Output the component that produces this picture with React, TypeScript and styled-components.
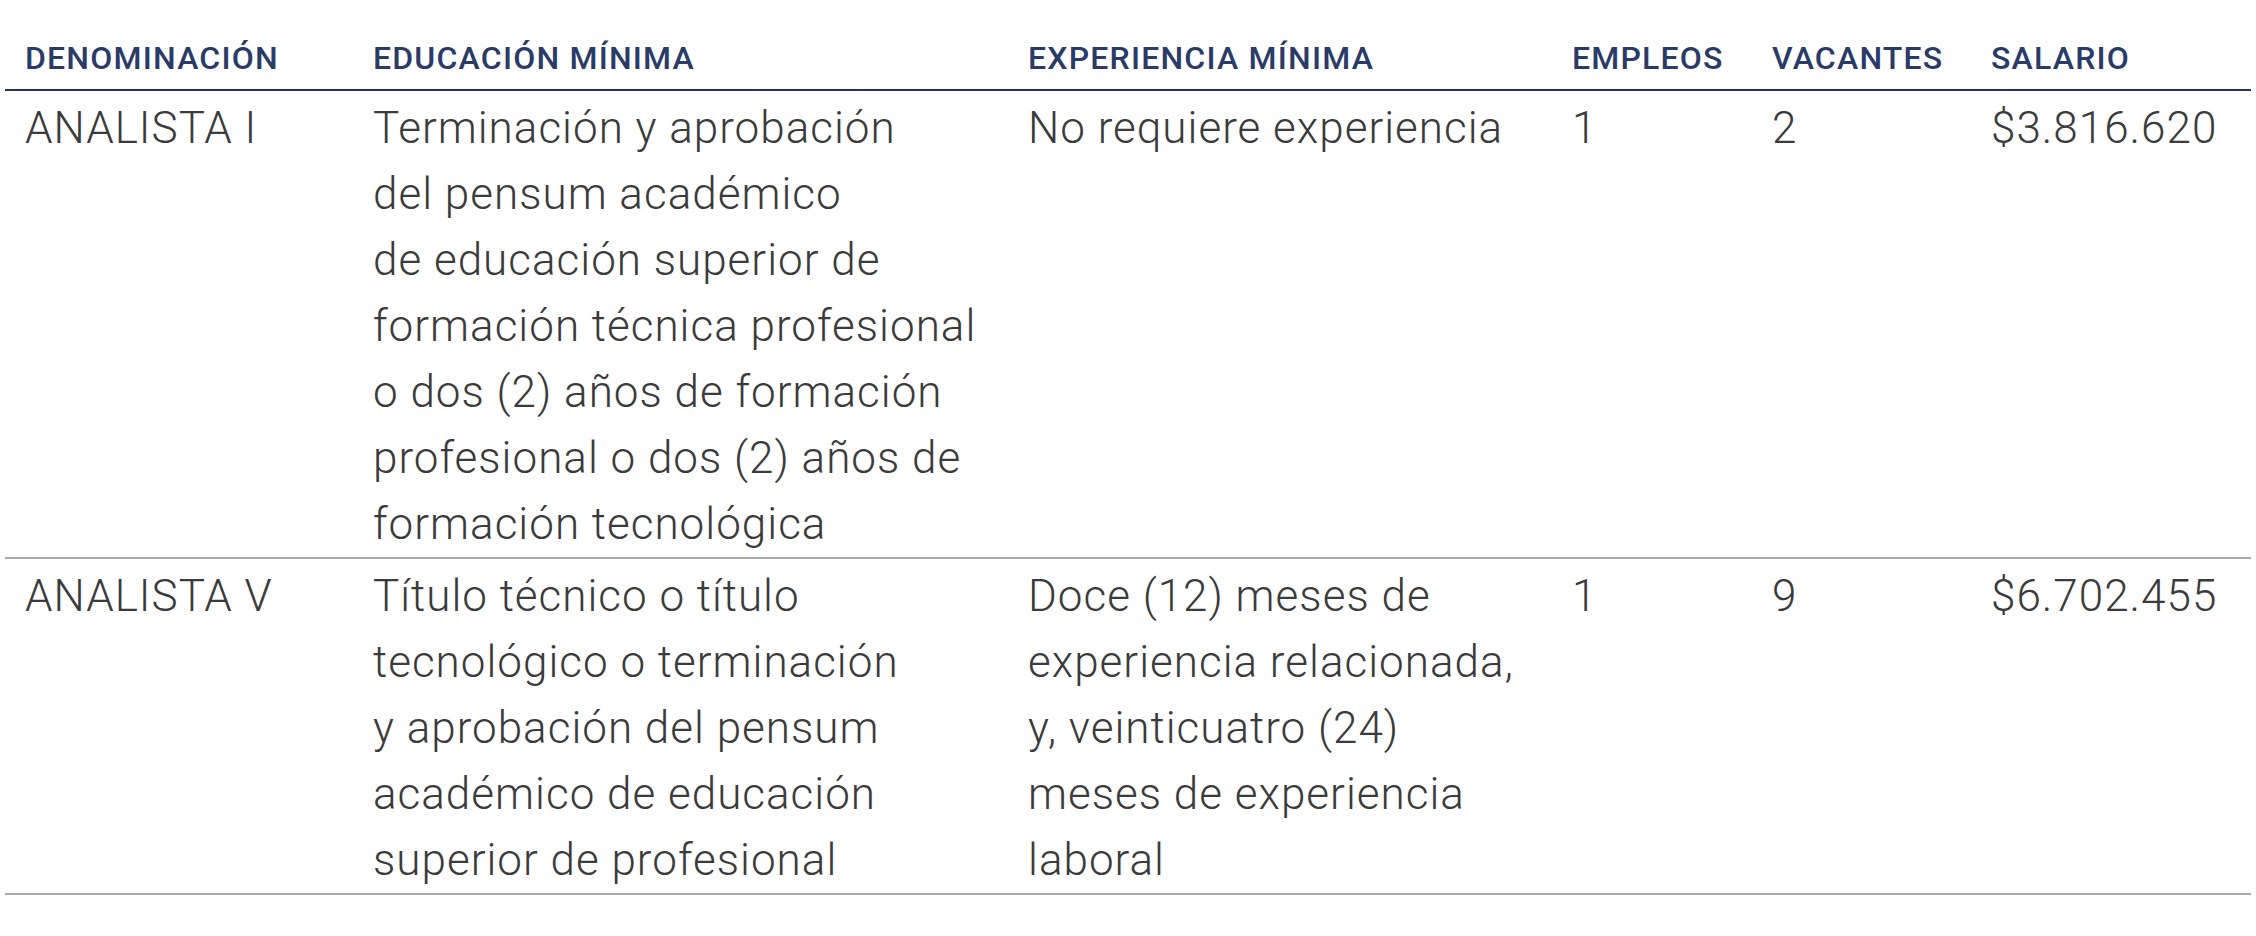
import React from 'react'
import styled, { createGlobalStyle } from 'styled-components'

interface Job {
  name: string
  education: string[]
  experience: string[]
  jobs: number
  vacancies: number
  salary: string
}

const jobs: Job[] = [
  {
    name: 'ANALISTA I',
    education: [
      'Terminación y aprobación',
      'del pensum académico',
      'de educación superior de',
      'formación técnica profesional',
      'o dos (2) años de formación',
      'profesional o dos (2) años de',
      'formación tecnológica',
    ],
    experience: ['No requiere experiencia'],
    jobs: 1,
    vacancies: 2,
    salary: '$3.816.620',
  },
  {
    name: 'ANALISTA V',
    education: [
      'Título técnico o título',
      'tecnológico o terminación',
      'y aprobación del pensum',
      'académico de educación',
      'superior de profesional',
    ],
    experience: [
      'Doce (12) meses de',
      'experiencia relacionada,',
      'y, veinticuatro (24)',
      'meses de experiencia',
      'laboral',
    ],
    jobs: 1,
    vacancies: 9,
    salary: '$6.702.455',
  },
]

const columns = [
  { label: 'DENOMINACIÓN', width: 348 },
  { label: 'EDUCACIÓN MÍNIMA', width: 655 },
  { label: 'EXPERIENCIA MÍNIMA', width: 544 },
  { label: 'EMPLEOS', width: 200 },
  { label: 'VACANTES', width: 219 },
  { label: 'SALARIO', width: 280 },
]

const GlobalStyle = createGlobalStyle`
  html, body {
    margin: 0;
    background: #ffffff;
  }
  body {
    font-family: Roboto, 'Noto Sans', sans-serif;
  }
`

const Page = styled.div`
  padding: 34px 5px 0 5px;
`

const Table = styled.table`
  width: 2246px;
  border-collapse: collapse;
  table-layout: fixed;
`

const HeadCell = styled.th<{ $width: number }>`
  box-sizing: border-box;
  width: ${({ $width }) => $width}px;
  padding: 0 0 7px 20px;
  text-align: left;
  font-size: 32px;
  font-weight: 500;
  letter-spacing: 1.2px;
  line-height: 48px;
  color: #2b3b68;
  white-space: nowrap;
  border-bottom: 2px solid #22335a;
`

const Row = styled.tr`
  border-bottom: 2px solid #a9a9a9;
`

const Cell = styled.td`
  padding: 4px 0 0 20px;
  vertical-align: top;
  font-size: 44px;
  font-weight: 300;
  letter-spacing: 1px;
  line-height: 66px;
  color: #3b3b3b;
  white-space: nowrap;
`

const Line = styled.span`
  display: block;
`

export default function App() {
  return (
    <>
      <GlobalStyle />
      <Page>
        <Table>
          <thead>
            <tr>
              {columns.map((col) => (
                <HeadCell key={col.label} $width={col.width}>
                  {col.label}
                </HeadCell>
              ))}
            </tr>
          </thead>
          <tbody>
            {jobs.map((job) => (
              <Row key={job.name}>
                <Cell>{job.name}</Cell>
                <Cell>
                  {job.education.map((line, i) => (
                    <Line key={i}>{line}</Line>
                  ))}
                </Cell>
                <Cell>
                  {job.experience.map((line, i) => (
                    <Line key={i}>{line}</Line>
                  ))}
                </Cell>
                <Cell>{job.jobs}</Cell>
                <Cell>{job.vacancies}</Cell>
                <Cell>{job.salary}</Cell>
              </Row>
            ))}
          </tbody>
        </Table>
      </Page>
    </>
  )
}
